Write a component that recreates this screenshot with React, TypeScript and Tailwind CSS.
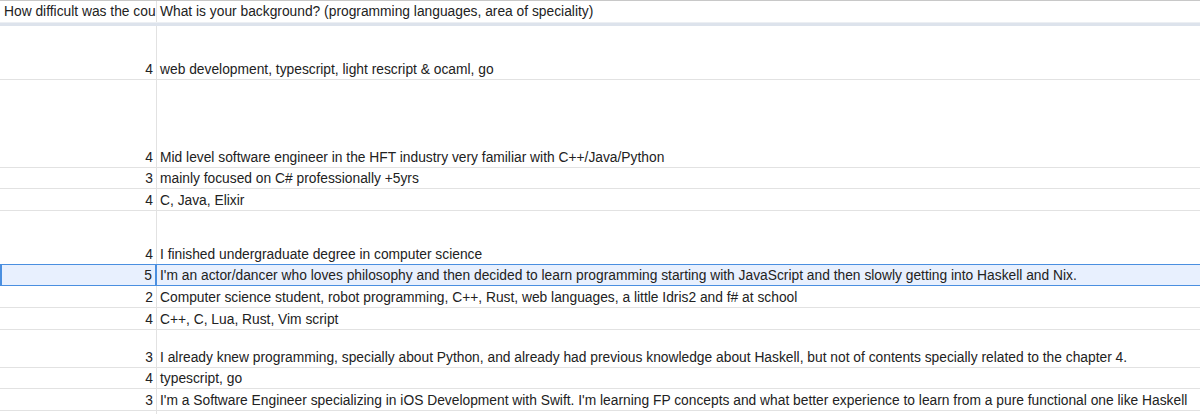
import React from "react";

const rows: [number, string | null, string][] = [
  [54, "4", "web development, typescript, light rescript & ocaml, go"],
  [88, "4", "Mid level software engineer in the HFT industry very familiar with C++/Java/Python"],
  [21, "3", "mainly focused on C# professionally +5yrs"],
  [22, "4", "C, Java, Elixir"],
  [54, "4", "I finished undergraduate degree in computer science"],
  [22, "5", "I'm an actor/dancer who loves philosophy and then decided to learn programming starting with JavaScript and then slowly getting into Haskell and Nix."],
  [22, "2", "Computer science student, robot programming, C++, Rust, web languages, a little Idris2 and f# at school"],
  [22, "4", "C++, C, Lua, Rust, Vim script"],
  [38, "3", "I already knew programming, specially about Python, and already had previous knowledge about Haskell, but not of contents specially related to the chapter 4."],
  [21, "4", "typescript, go"],
  [22, "3", "I'm a Software Engineer specializing in iOS Development with Swift. I'm learning FP concepts and what better experience to learn from a pure functional one like Haskell"],
  [22, null, ""],
];

export default function App() {
  return (
    <div className="w-[1200px] h-[414px] overflow-hidden bg-white text-[13.8px] leading-[16px] text-[#222] border-t border-[#c8c8c8]" style={{ fontFamily: '"Liberation Sans", Arial, sans-serif' }}>
      <div className="flex h-[21px] items-end">
        <div className="w-[157px] shrink-0 h-full border-r border-[#e2e2e2] pl-[4px] pb-[2px] overflow-hidden whitespace-nowrap flex items-end">How difficult was the cou</div>
        <div className="flex-1 h-full pl-[3px] pb-[2px] whitespace-nowrap flex items-end">What is your background? (programming languages, area of speciality)</div>
      </div>
      <div className="h-[4px] bg-[#dde3ec] border-t border-[#eceff3]" />
      {rows.map(([h, n, t], i) => {
        const sel = n === "5";
        return (
          <div key={i} className={`flex border-b ${sel ? "bg-[#e8f0fe] border-[#4a8fe0] border-t border-t-[#4a8fe0] -mt-px relative" : "border-[#e2e2e2]"}`} style={{ height: h }}>
            <div className={`w-[157px] shrink-0 flex items-end justify-end pr-[3px] pb-[1px] ${sel ? "border-x-2 border-[#4a8fe0]" : "border-r border-[#e2e2e2]"}`}>{n}</div>
            <div className="flex-1 flex items-end pl-[3px] pb-[1px] whitespace-nowrap overflow-hidden">{t}</div>
          </div>
        );
      })}
    </div>
  );
}
